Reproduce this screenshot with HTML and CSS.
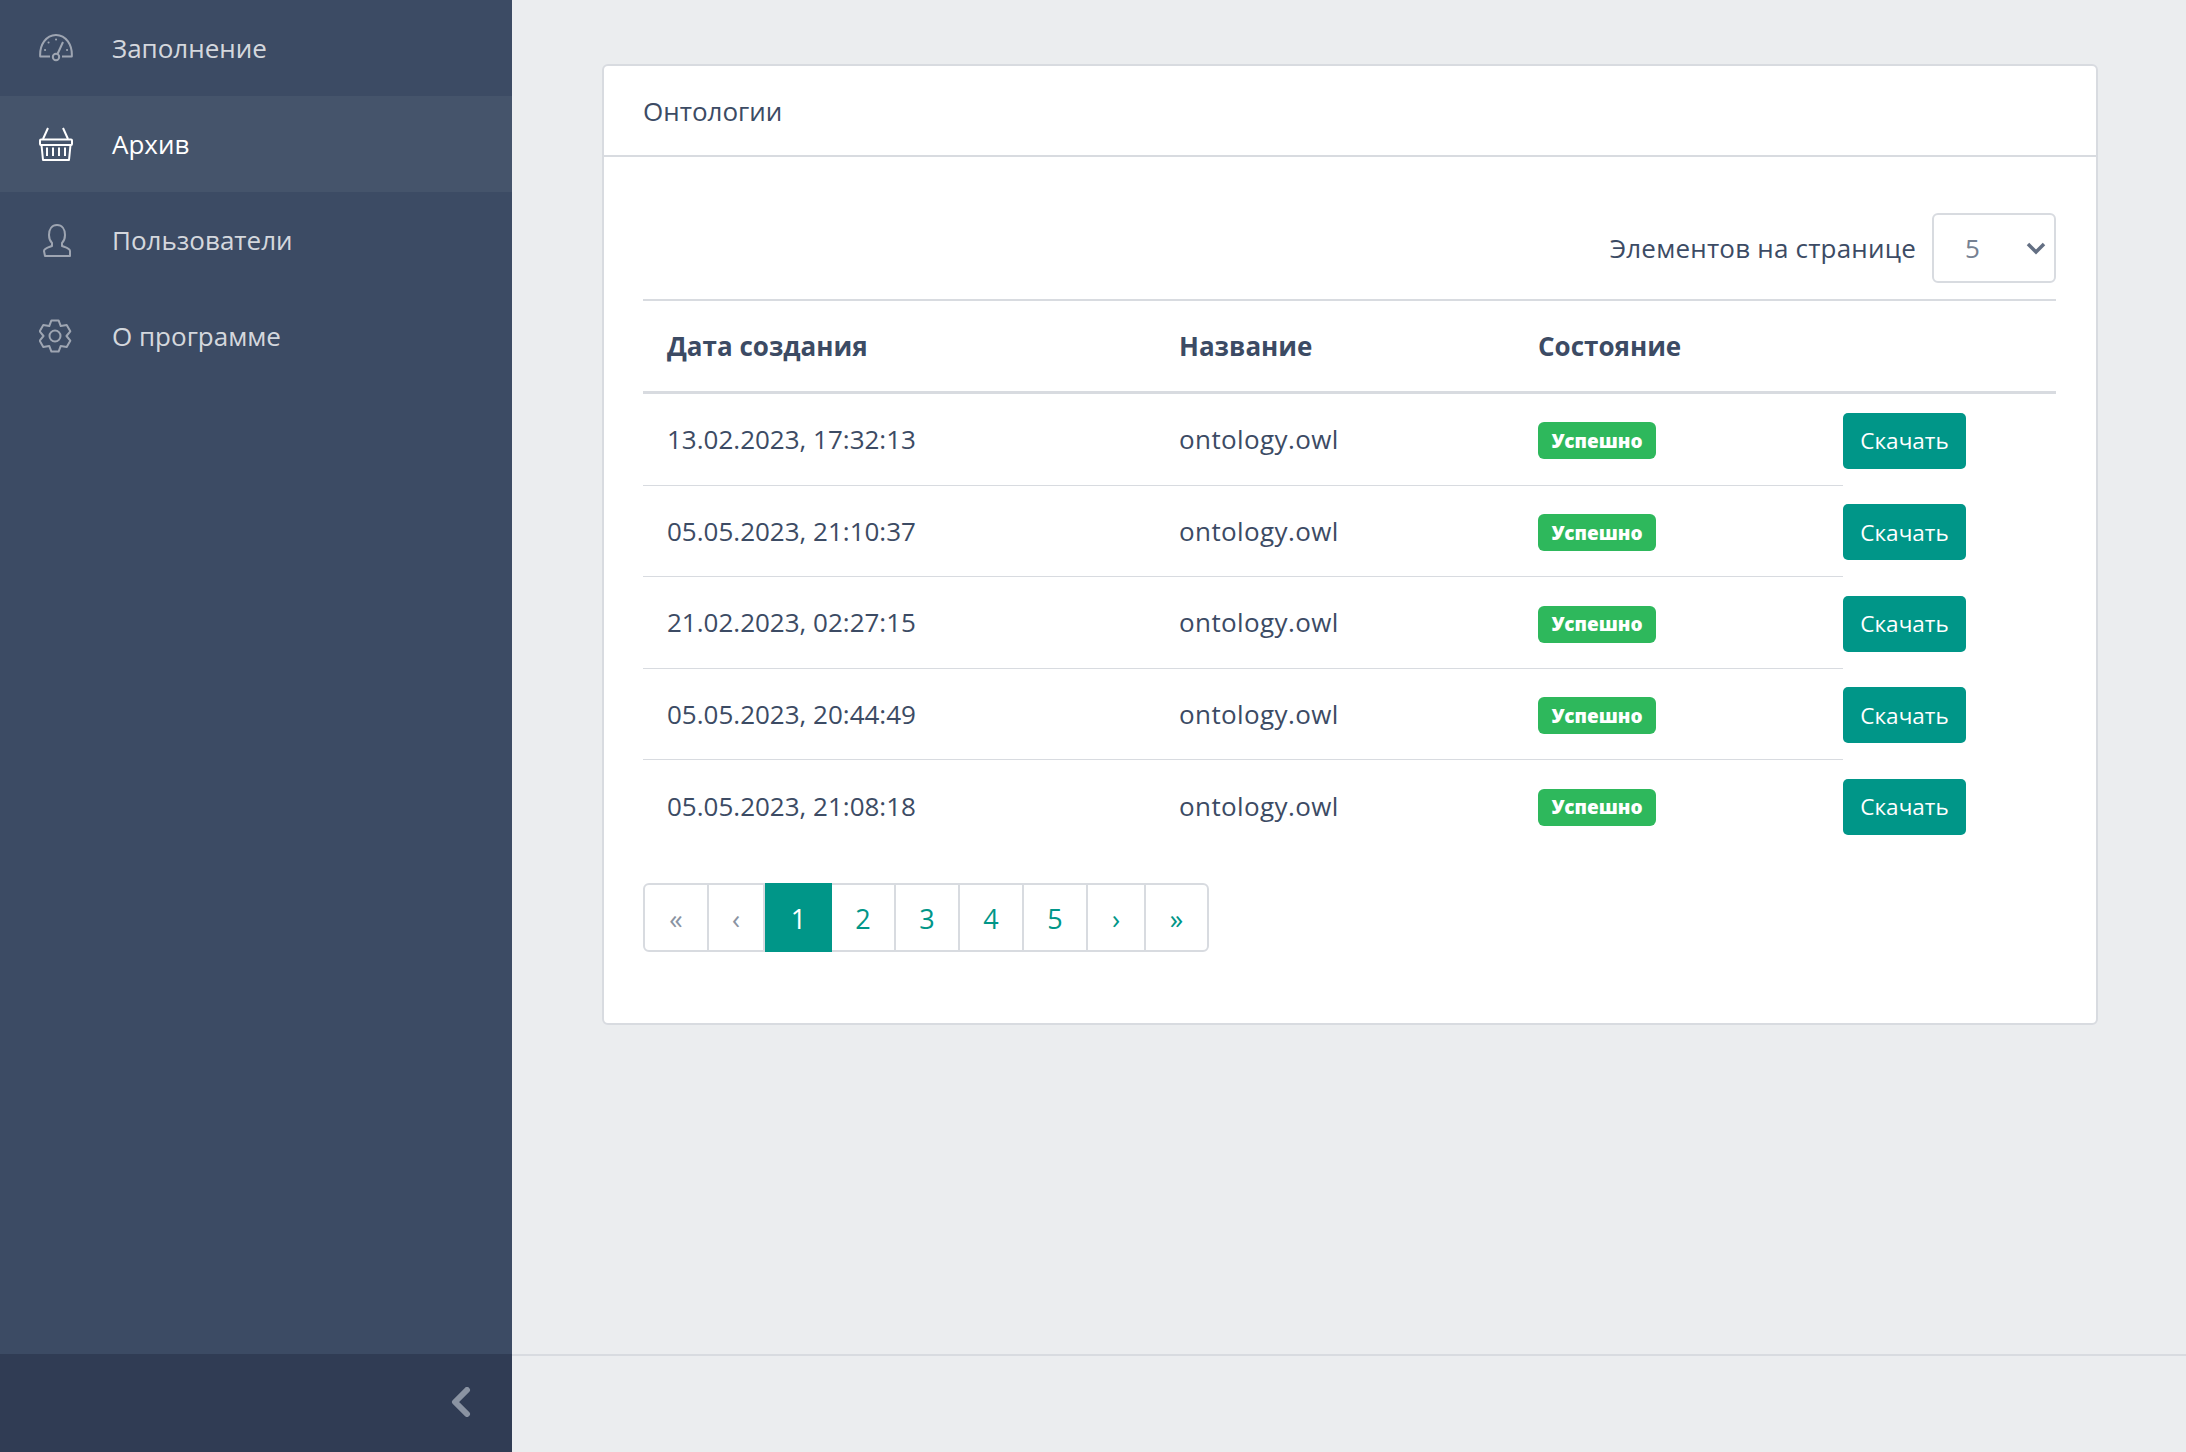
FILE: index.html
```html
<!DOCTYPE html>
<html lang="ru">
<head>
    <meta charset="UTF-8">
    <title>Онтологии</title>
    <link rel="stylesheet" href="styles.css">
</head>
<body>
    <div class="sidebar">
        <nav class="side-nav">
            <a class="nav-link">
                <svg class="nav-icon" viewBox="0 0 34 34"><path d="M11 25.500H1.200C.5 14 7 4 17 4s16.500 10 15.800 21.500H23"/><circle cx="17" cy="26" r="3.200"/><path d="M18.500 23L24 11"/><path class="nav-icon-dots" d="M6 19h.1M9.500 11.500h.1M17 8.500h.1M28 19h.1"/></svg>
                Заполнение
            </a>
            <a class="nav-link active">
                <svg class="nav-icon" viewBox="0 0 34 34"><path d="M9 1L4 12M24 1l5 11"/><rect x="1" y="12.500" width="32" height="5.500" rx="1"/><path d="M2.500 18L4 33h26l1.500-15"/><path d="M8 20.500V29M14 20.500V29M20 20.500V29M26 20.500V29"/></svg>
                Архив
            </a>
            <a class="nav-link">
                <svg class="nav-icon" viewBox="0 0 34 34"><path d="M6 33h25v-5c0-3-6-4-8-5v-3c2-2 3-4 3-8 0-6-3-10-8-10s-8 4-8 10c0 4 1 6 3 8v3c-2 1-8 2-8 5z"/></svg>
                Пользователи
            </a>
            <a class="nav-link">
                <svg class="nav-icon" viewBox="0 0 34 34"><path d="M12.400 1.400H19.600L21.750 7.040 27.700 6.100 31.300 12.300 27.500 17 31.300 21.700 27.700 27.900 21.750 26.960 19.600 32.600H12.400L10.250 26.960 4.300 27.900.7 21.700 4.500 17 .7 12.300 4.300 6.100 10.250 7.040z"/><circle cx="16" cy="17" r="5.500"/></svg>
                О программе
            </a>
        </nav>
        <div class="minimizer">
            <svg class="minimizer-icon" viewBox="0 0 20 30"><path d="M16 3L4 15l12 12"/></svg>
        </div>
    </div>
    <div class="wrapper">
        <main class="main">
            <div class="card">
                <div class="card-header">Онтологии</div>
                <div class="card-body">
                    <div class="per-page">
                        <span class="per-page-label">Элементов на странице</span>
                        <div class="select-box">
                            <span>5</span>
                            <svg class="select-arrow" viewBox="0 0 20 14"><path d="M2 3l8 8 8-8"/></svg>
                        </div>
                    </div>
                    <table class="table">
                        <colgroup>
                            <col class="col-date">
                            <col class="col-name">
                            <col class="col-state">
                            <col class="col-action">
                        </colgroup>
                        <thead>
                            <tr>
                                <th>Дата создания</th>
                                <th>Название</th>
                                <th>Состояние</th>
                                <th></th>
                            </tr>
                        </thead>
                        <tbody>
                            <tr>
                                <td>13.02.2023, 17:32:13</td>
                                <td class="file-name">ontology.owl</td>
                                <td><span class="badge">Успешно</span></td>
                                <td class="action"><button class="btn">Скачать</button></td>
                            </tr>
                            <tr>
                                <td>05.05.2023, 21:10:37</td>
                                <td class="file-name">ontology.owl</td>
                                <td><span class="badge">Успешно</span></td>
                                <td class="action"><button class="btn">Скачать</button></td>
                            </tr>
                            <tr>
                                <td>21.02.2023, 02:27:15</td>
                                <td class="file-name">ontology.owl</td>
                                <td><span class="badge">Успешно</span></td>
                                <td class="action"><button class="btn">Скачать</button></td>
                            </tr>
                            <tr>
                                <td>05.05.2023, 20:44:49</td>
                                <td class="file-name">ontology.owl</td>
                                <td><span class="badge">Успешно</span></td>
                                <td class="action"><button class="btn">Скачать</button></td>
                            </tr>
                            <tr>
                                <td>05.05.2023, 21:08:18</td>
                                <td class="file-name">ontology.owl</td>
                                <td><span class="badge">Успешно</span></td>
                                <td class="action"><button class="btn">Скачать</button></td>
                            </tr>
                        </tbody>
                    </table>
                    <ul class="pagination">
                        <li class="page-item disabled w-first">«</li>
                        <li class="page-item disabled w-prev">‹</li>
                        <li class="page-item active w-one">1</li>
                        <li class="page-item w-two">2</li>
                        <li class="page-item w-num">3</li>
                        <li class="page-item w-num">4</li>
                        <li class="page-item w-num">5</li>
                        <li class="page-item w-next">›</li>
                        <li class="page-item w-last">»</li>
                    </ul>
                </div>
            </div>
        </main>
        <footer class="footer"></footer>
    </div>
</body>
</html>
```

FILE: styles.css
```css
* {
    box-sizing: border-box;
}
body {
    margin: 0;
    height: 100vh;
    display: flex;
    overflow: hidden;
    background-color: #ebedef;
    color: #3c4b64;
    font-family: "Open Sans", "Noto Sans", sans-serif;
    font-size: 26px;
}
.sidebar {
    width: 512px;
    flex-shrink: 0;
    display: flex;
    flex-direction: column;
    background-color: #3c4b64;
}
.side-nav {
    flex-grow: 1;
}
.nav-link {
    height: 96px;
    display: flex;
    align-items: center;
    gap: 39px;
    padding-left: 39px;
    color: rgba(255, 255, 255, 0.8);
}
.nav-link.active {
    background-color: rgba(255, 255, 255, 0.05);
    color: #fff;
}
.nav-icon {
    width: 34px;
    height: 34px;
    flex-shrink: 0;
    fill: none;
    stroke: #fff;
    stroke-width: 2;
    stroke-linejoin: round;
    opacity: 0.5;
}
.nav-icon-dots {
    stroke-linecap: round;
}
.nav-link.active .nav-icon {
    opacity: 1;
}
.minimizer {
    height: 98px;
    display: flex;
    align-items: center;
    justify-content: flex-end;
    padding: 0 41px 2px 0;
    background-color: #303c54;
}
.minimizer-icon {
    width: 20px;
    height: 30px;
    fill: none;
    stroke: #8a93a2;
    stroke-width: 6;
    stroke-linecap: round;
    stroke-linejoin: round;
}
.wrapper {
    flex-grow: 1;
    display: flex;
    flex-direction: column;
}
.main {
    flex-grow: 1;
    padding: 64px 88px 0 90px;
}
.footer {
    height: 98px;
    border-top: 2px solid #d8dbe0;
}
.card {
    height: 961px;
    background-color: #fff;
    border: 2px solid #d8dbe0;
    border-radius: 6px;
}
.card-header {
    height: 91px;
    display: flex;
    align-items: center;
    padding-left: 39px;
    border-bottom: 2px solid #d8dbe0;
}
.card-body {
    padding: 56px 40px 0 39px;
}
.per-page {
    display: flex;
    justify-content: flex-end;
    align-items: center;
    gap: 16px;
    margin-bottom: 16px;
}
.per-page-label {
    letter-spacing: 0.2px;
}
.select-box {
    width: 124px;
    height: 70px;
    display: flex;
    align-items: center;
    justify-content: space-between;
    padding: 0 8px 0 31px;
    border: 2px solid #d8dbe0;
    border-radius: 6px;
    color: #768192;
}
.select-arrow {
    width: 20px;
    height: 14px;
    fill: none;
    stroke: #636f83;
    stroke-width: 3.500;
}
.table {
    width: 100%;
    border-collapse: collapse;
    table-layout: fixed;
}
.col-date {
    width: 512px;
}
.col-name {
    width: 359px;
}
.col-state {
    width: 329px;
}
.table th {
    height: 92px;
    padding: 0 24px;
    text-align: left;
    font-weight: 700;
    border-top: 2px solid #d8dbe0;
    border-bottom: 3px solid #d8dbe0;
}
.table td {
    height: 91.500px;
    padding: 0 24px;
    border-bottom: 1.500px solid #d8dbe0;
}
.table tbody tr:first-child td {
    height: 93px;
}
.table tbody tr:last-child td {
    border-bottom: none;
}
.table td.file-name {
    letter-spacing: 0.4px;
}
.table td.action {
    padding: 0;
    border-bottom: none;
}
.badge {
    display: inline-flex;
    align-items: center;
    justify-content: center;
    width: 118px;
    height: 37px;
    margin-top: 2px;
    vertical-align: middle;
    border-radius: 6px;
    background-color: #2eb85c;
    color: #fff;
    font-size: 19px;
    font-weight: 800;
}
.btn {
    width: 123px;
    height: 56px;
    margin-top: 3px;
    padding: 0;
    border: none;
    border-radius: 5px;
    background-color: #009688;
    color: #fff;
    font-family: inherit;
    font-size: 22.500px;
    vertical-align: middle;
}
.pagination {
    display: flex;
    width: 566px;
    height: 69px;
    margin: 32px 0 0;
    padding: 0;
    list-style: none;
    border: 2px solid #d8dbe0;
    border-radius: 6px;
    color: #009688;
    font-size: 27px;
}
.page-item {
    flex-shrink: 0;
    display: flex;
    align-items: center;
    justify-content: center;
    padding-top: 2px;
    border-right: 2px solid #d8dbe0;
}
.page-item:last-child {
    border-right: none;
}
.page-item.disabled {
    color: #8a93a2;
}
.page-item.active {
    margin: -2px 0;
    background-color: #009688;
    color: #fff;
    border-right: none;
}
.w-first {
    width: 64px;
}
.w-prev {
    width: 56px;
}
.w-one {
    width: 67px;
}
.w-two {
    width: 64px;
}
.w-num {
    width: 64px;
}
.w-next {
    width: 58px;
}
.w-last {
    width: 61px;
}
```
